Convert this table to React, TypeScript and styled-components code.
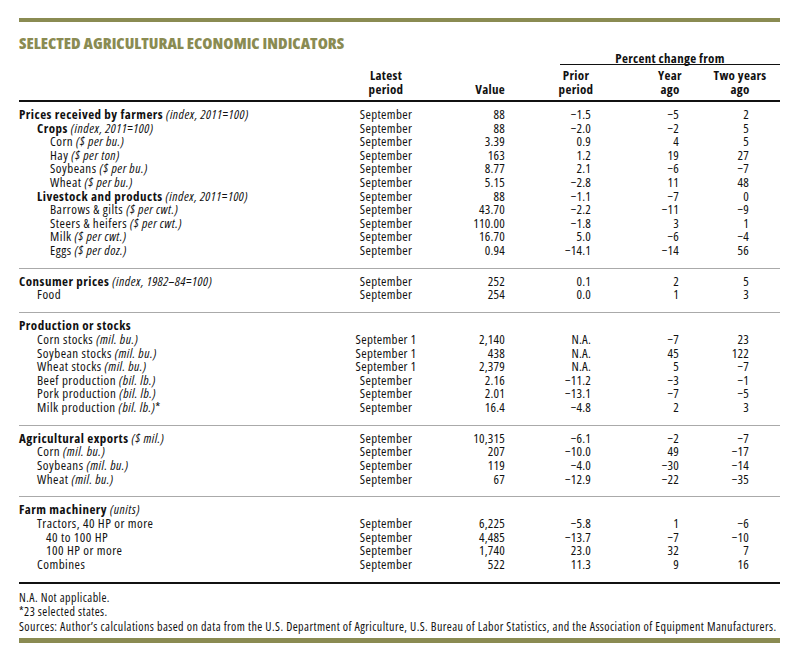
import React from "react";
import styled, { createGlobalStyle } from "styled-components";

const COND = "75%";

const GlobalStyle = createGlobalStyle`
  html, body { margin: 0; padding: 0; background: #ffffff; }
  body {
    font-family: "Open Sans", "DejaVu Sans Condensed", sans-serif;
    font-stretch: ${COND};
    color: #111111;
  }
`;

const OLIVE = "#8a8b52";
const COLS = "336px 62px 88px 142px 46px 87px";

const Page = styled.div`
  width: 761px;
  margin-left: 19px;
  padding-top: 18px;
`;

const OliveBar = styled.div`
  height: 4px;
  background: ${OLIVE};
`;

const Title = styled.h1`
  margin: 12px 0 0;
  font-size: 16.4px;
  line-height: 18px;
  font-weight: 800;
  font-stretch: ${COND};
  color: ${OLIVE};
`;

const HeaderGrid = styled.div`
  display: grid;
  grid-template-columns: ${COLS};
  border-bottom: 2px solid #111;
  padding-bottom: 4px;
  font-weight: 700;
  font-size: 13px;
  letter-spacing: 0.3px;
`;

const SpanHead = styled.div`
  grid-column: 4 / 7;
  grid-row: 1;
  margin-left: 55px;
  text-align: center;
  line-height: 12px;
  border-bottom: 1px solid #111;
`;

const ColHead = styled.div<{ $col: number; $pl?: number }>`
  grid-column: ${(p) => p.$col};
  grid-row: 2;
  align-self: end;
  margin-top: 3px;
  line-height: 14px;
  text-align: center;
  padding-left: ${(p) => p.$pl ?? 0}px;
`;

const ValueHead = styled(ColHead)`
  text-align: right;
`;

const Group = styled.section<{ $last?: boolean }>`
  padding: 6px 0 10.3px;
  border-bottom: ${(p) => (p.$last ? "2px solid #111" : "1px solid #aaaaaa")};
`;

const Row = styled.div`
  display: grid;
  grid-template-columns: ${COLS};
  font-size: 13px;
  line-height: 13.6px;
  height: 13.6px;
  white-space: nowrap;
  letter-spacing: 0.2px;
`;

const Label = styled.div<{ $indent: number }>`
  padding-left: ${(p) => p.$indent}px;
  letter-spacing: 0.48px;
`;

const Strong = styled.b`
  font-weight: 700;
`;

const Unit = styled.i`
  font-weight: 400;
`;

const Period = styled.div`
  text-align: center;
  letter-spacing: 0.33px;
`;

const ValueCell = styled.div`
  text-align: right;
`;

const NumCell = styled.div<{ $pl?: number }>`
  display: flex;
  justify-content: center;
  padding-left: ${(p) => p.$pl ?? 0}px;
`;

const NumBox = styled.span<{ $w: number }>`
  display: inline-block;
  width: ${(p) => p.$w}px;
  text-align: right;
`;

const Notes = styled.div`
  padding-top: 7px;
  font-size: 12px;
  letter-spacing: 0.43px;
  line-height: 14.5px;
  white-space: nowrap;
`;

const BottomBar = styled(OliveBar)`
  margin-top: 4px;
  height: 5px;
`;

type R = {
  label: string;
  unit?: string;
  suffix?: string;
  indent: number;
  bold?: boolean;
  period?: string;
  value?: string;
  prior?: string;
  year?: string;
  two?: string;
};

const S = "September";
const S1 = "September 1";

const groups: R[][] = [
  [
    { label: "Prices received by farmers", unit: "(index, 2011=100)", indent: 0, bold: true, period: S, value: "88", prior: "−1.5", year: "−5", two: "2" },
    { label: "Crops", unit: "(index, 2011=100)", indent: 18, bold: true, period: S, value: "88", prior: "−2.0", year: "−2", two: "5" },
    { label: "Corn", unit: "($ per bu.)", indent: 31, period: S, value: "3.39", prior: "0.9", year: "4", two: "5" },
    { label: "Hay", unit: "($ per ton)", indent: 31, period: S, value: "163", prior: "1.2", year: "19", two: "27" },
    { label: "Soybeans", unit: "($ per bu.)", indent: 31, period: S, value: "8.77", prior: "2.1", year: "−6", two: "−7" },
    { label: "Wheat", unit: "($ per bu.)", indent: 31, period: S, value: "5.15", prior: "−2.8", year: "11", two: "48" },
    { label: "Livestock and products", unit: "(index, 2011=100)", indent: 18, bold: true, period: S, value: "88", prior: "−1.1", year: "−7", two: "0" },
    { label: "Barrows & gilts", unit: "($ per cwt.)", indent: 31, period: S, value: "43.70", prior: "−2.2", year: "−11", two: "−9" },
    { label: "Steers & heifers", unit: "($ per cwt.)", indent: 31, period: S, value: "110.00", prior: "−1.8", year: "3", two: "1" },
    { label: "Milk", unit: "($ per cwt.)", indent: 31, period: S, value: "16.70", prior: "5.0", year: "−6", two: "−4" },
    { label: "Eggs", unit: "($ per doz.)", indent: 31, period: S, value: "0.94", prior: "−14.1", year: "−14", two: "56" },
  ],
  [
    { label: "Consumer prices", unit: "(index, 1982–84=100)", indent: 0, bold: true, period: S, value: "252", prior: "0.1", year: "2", two: "5" },
    { label: "Food", indent: 18, period: S, value: "254", prior: "0.0", year: "1", two: "3" },
  ],
  [
    { label: "Production or stocks", indent: 0, bold: true },
    { label: "Corn stocks", unit: "(mil. bu.)", indent: 18, period: S1, value: "2,140", prior: "N.A.", year: "−7", two: "23" },
    { label: "Soybean stocks", unit: "(mil. bu.)", indent: 18, period: S1, value: "438", prior: "N.A.", year: "45", two: "122" },
    { label: "Wheat stocks", unit: "(mil. bu.)", indent: 18, period: S1, value: "2,379", prior: "N.A.", year: "5", two: "−7" },
    { label: "Beef production", unit: "(bil. lb.)", indent: 18, period: S, value: "2.16", prior: "−11.2", year: "−3", two: "−1" },
    { label: "Pork production", unit: "(bil. lb.)", indent: 18, period: S, value: "2.01", prior: "−13.1", year: "−7", two: "−5" },
    { label: "Milk production", unit: "(bil. lb.)", suffix: "*", indent: 18, period: S, value: "16.4", prior: "−4.8", year: "2", two: "3" },
  ],
  [
    { label: "Agricultural exports", unit: "($ mil.)", indent: 0, bold: true, period: S, value: "10,315", prior: "−6.1", year: "−2", two: "−7" },
    { label: "Corn", unit: "(mil. bu.)", indent: 18, period: S, value: "207", prior: "−10.0", year: "49", two: "−17" },
    { label: "Soybeans", unit: "(mil. bu.)", indent: 18, period: S, value: "119", prior: "−4.0", year: "−30", two: "−14" },
    { label: "Wheat", unit: "(mil. bu.)", indent: 18, period: S, value: "67", prior: "−12.9", year: "−22", two: "−35" },
  ],
  [
    { label: "Farm machinery", unit: "(units)", indent: 0, bold: true },
    { label: "Tractors, 40 HP or more", indent: 18, period: S, value: "6,225", prior: "−5.8", year: "1", two: "−6" },
    { label: "40 to 100 HP", indent: 27, period: S, value: "4,485", prior: "−13.7", year: "−7", two: "−10" },
    { label: "100 HP or more", indent: 27, period: S, value: "1,740", prior: "23.0", year: "32", two: "7" },
    { label: "Combines", indent: 18, period: S, value: "522", prior: "11.3", year: "9", two: "16" },
  ],
];

function DataRow({ r }: { r: R }) {
  return (
    <Row>
      <Label $indent={r.indent}>
        {r.bold ? <Strong>{r.label}</Strong> : r.label}
        {r.unit && (
          <>
            {" "}
            <Unit>{r.unit}</Unit>
          </>
        )}
        {r.suffix}
      </Label>
      <Period>{r.period}</Period>
      <ValueCell>{r.value}</ValueCell>
      <NumCell>
        <NumBox $w={30}>{r.prior}</NumBox>
      </NumCell>
      <NumCell>
        <NumBox $w={18}>{r.year}</NumBox>
      </NumCell>
      <NumCell $pl={7}>
        <NumBox $w={18}>{r.two}</NumBox>
      </NumCell>
    </Row>
  );
}

export default function App() {
  return (
    <Page>
      <GlobalStyle />
      <OliveBar />
      <Title>SELECTED AGRICULTURAL ECONOMIC INDICATORS</Title>
      <HeaderGrid>
        <SpanHead>Percent change from</SpanHead>
        <ColHead $col={2}>
          Latest
          <br />
          period
        </ColHead>
        <ValueHead $col={3}>Value</ValueHead>
        <ColHead $col={4}>
          Prior
          <br />
          period
        </ColHead>
        <ColHead $col={5}>
          Year
          <br />
          ago
        </ColHead>
        <ColHead $col={6} $pl={7}>
          Two years
          <br />
          ago
        </ColHead>
      </HeaderGrid>
      {groups.map((g, i) => (
        <Group key={i} $last={i === groups.length - 1}>
          {g.map((r, j) => (
            <DataRow key={j} r={r} />
          ))}
        </Group>
      ))}
      <Notes>
        <div>N.A. Not applicable.</div>
        <div>*23 selected states.</div>
        <div>
          Sources: Author’s calculations based on data from the U.S. Department of Agriculture, U.S. Bureau of Labor
          Statistics, and the Association of Equipment Manufacturers.
        </div>
      </Notes>
      <BottomBar />
    </Page>
  );
}
